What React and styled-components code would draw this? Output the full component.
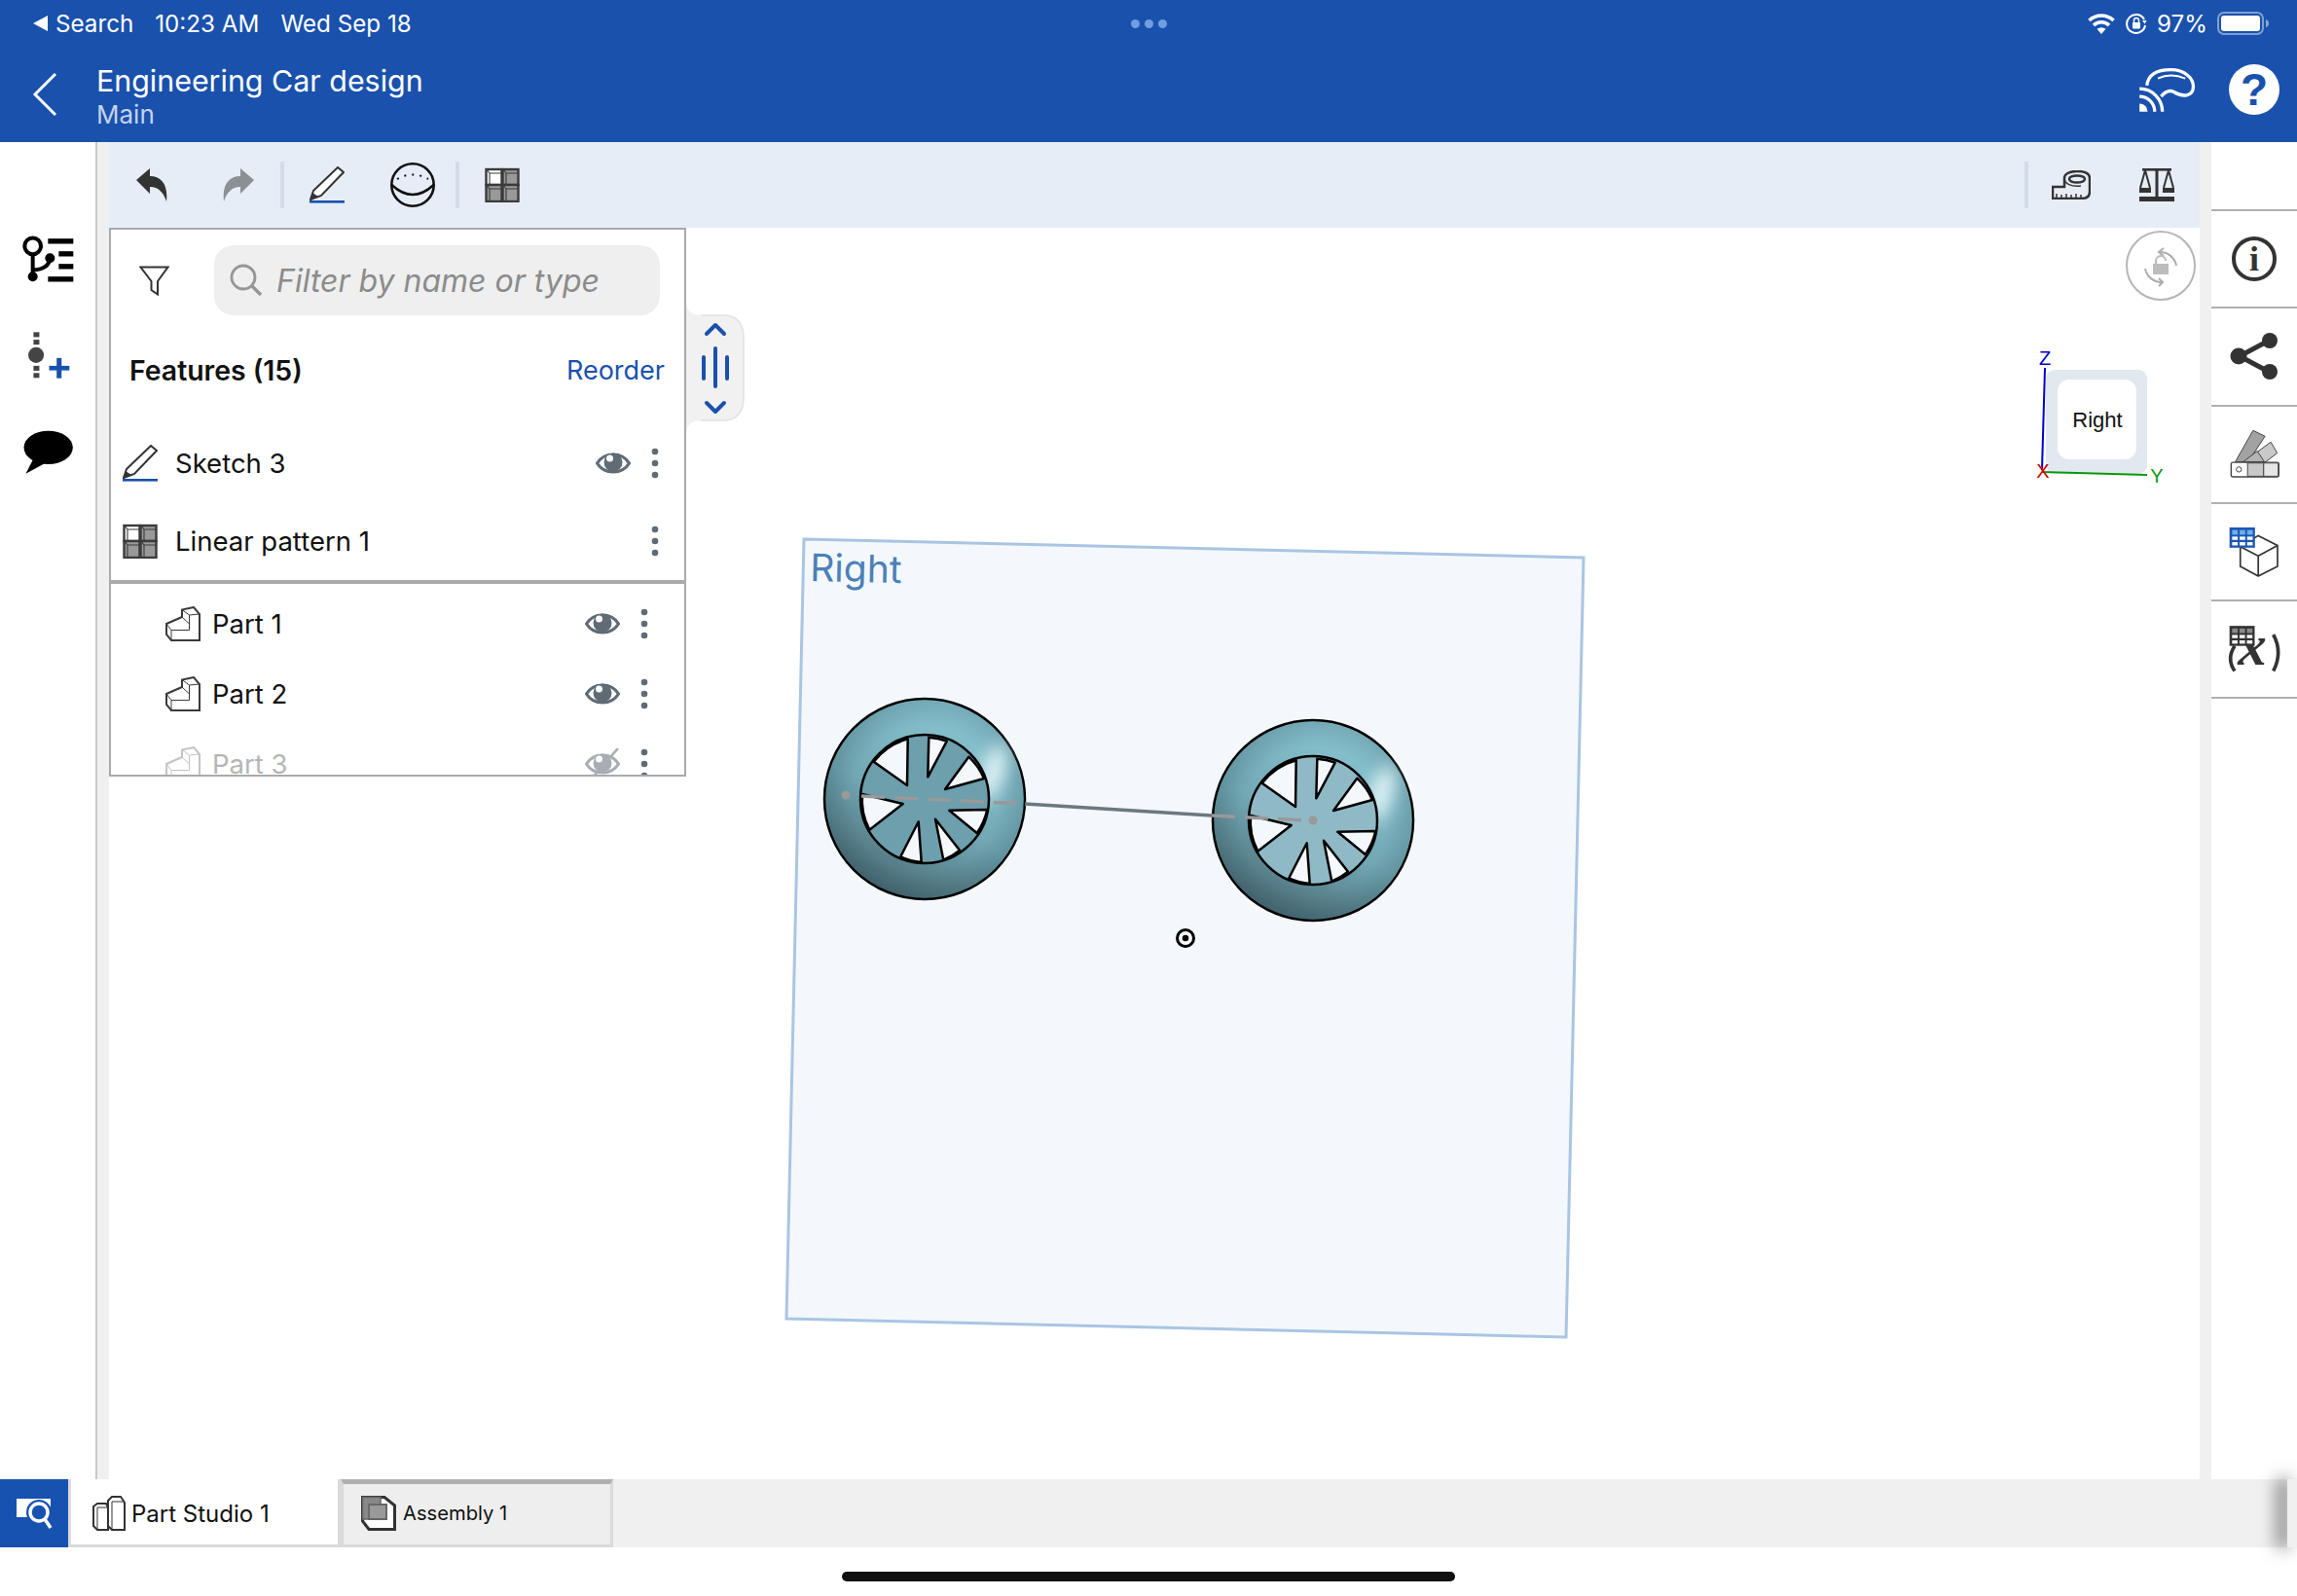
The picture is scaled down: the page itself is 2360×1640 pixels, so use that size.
import styled, { createGlobalStyle } from 'styled-components';

const BLUE = '#1951ad';
const INK = '#333';

const Global = createGlobalStyle`
    html, body { margin: 0; padding: 0; background: #fff; }
    body { font-family: Inter, "Noto Sans", sans-serif; color: #111; }
`;

const Page = styled.div`
    width: 2360px;
    height: 1640px;
    display: flex;
    flex-direction: column;
    overflow: hidden;
    background: #fff;
`;

const Header = styled.header`
    height: 146px;
    flex: none;
    background: ${BLUE};
    color: #fff;
    position: relative;
    display: flex;
    flex-direction: column;
`;

const StatusBar = styled.div`
    height: 48px;
    display: flex;
    align-items: center;
    justify-content: space-between;
    padding: 0 28px 0 33px;
    font-size: 24.2px;
`;

const StatusSide = styled.div`
    display: flex;
    align-items: center;
    gap: ${(p) => p.$gap}px;
`;

const BackSearch = styled.span`
    display: flex;
    align-items: center;
    gap: 7px;
`;

const CenterDots = styled.div`
    position: absolute;
    top: 20px;
    left: 1162px;
    display: flex;
    gap: 5px;
    i {
        width: 9px;
        height: 9px;
        border-radius: 50%;
        background: #6f9fe0;
    }
`;

const TitleBar = styled.div`
    flex: 1;
    display: flex;
    align-items: center;
    padding: 0 18px 0 33px;
`;

const TitleText = styled.div`
    margin-left: 40px;
    display: flex;
    flex-direction: column;
`;

const DocTitle = styled.div`
    font-size: 30.4px;
    line-height: 40px;
    margin-top: 2px;
`;

const DocSub = styled.div`
    font-size: 26px;
    line-height: 30px;
    color: #c4d3ec;
`;

const HeaderRight = styled.div`
    margin-left: auto;
    display: flex;
    align-items: center;
    gap: 33px;
    margin-top: -10px;
`;

const HelpBadge = styled.div`
    width: 52px;
    height: 52px;
    border-radius: 50%;
    background: #fff;
    color: ${BLUE};
    font-family: 'Liberation Sans', sans-serif;
    font-weight: 700;
    font-size: 46px;
    line-height: 52px;
    text-align: center;
`;

const Body = styled.div`
    flex: none;
    height: 1374px;
    display: flex;
`;

const LeftRail = styled.nav`
    width: 98px;
    flex: none;
    display: flex;
    flex-direction: column;
    align-items: center;
    padding-top: 94px;
    box-sizing: border-box;
    svg { display: block; }
`;

const Strip = styled.div`
    width: ${(p) => p.$w}px;
    flex: none;
    background: #f0f0f0;
    border-left: ${(p) => (p.$line ? '2px solid #c8c8c8' : 'none')};
    box-sizing: border-box;
`;

const Main = styled.main`
    width: 2148px;
    flex: none;
    display: flex;
    flex-direction: column;
`;

const Toolbar = styled.div`
    height: 88px;
    flex: none;
    background: #e7edf7;
    display: flex;
    align-items: center;
`;

const Tool = styled.div`
    display: flex;
    margin-left: ${(p) => p.$ml}px;
    svg { display: block; }
`;

const ToolSep = styled.div`
    width: 4px;
    height: 48px;
    background: #d2dde7;
    margin-left: ${(p) => p.$ml};
`;

const Canvas = styled.div`
    flex: 1;
    position: relative;
    background: #fff;
`;

const Scene = styled.svg`
    position: absolute;
    inset: 0;
`;

const Panel = styled.section`
    position: absolute;
    left: 0;
    top: 0;
    width: 593px;
    height: 564px;
    box-sizing: border-box;
    border: 2px solid #aaa;
    background: #fff;
    overflow: hidden;
    display: flex;
    flex-direction: column;
`;

const SearchRow = styled.div`
    height: 72px;
    flex: none;
    margin-top: 16px;
    display: flex;
    align-items: center;
    padding-left: 29px;
`;

const SearchBox = styled.div`
    width: 458px;
    height: 72px;
    margin-left: 46px;
    border-radius: 20px;
    background: #efefef;
    display: flex;
    align-items: center;
    padding-left: 16px;
    box-sizing: border-box;
    color: #8b8b8b;
    font-style: italic;
    font-size: 32px;
    gap: 14px;
`;

const FeatureHead = styled.div`
    height: 112px;
    flex: none;
    display: flex;
    align-items: center;
    justify-content: space-between;
    padding: 0 20px 0 19px;
    box-sizing: border-box;
`;

const HeadLabel = styled.div`
    font-size: 28.4px;
    font-weight: 600;
    color: #111;
`;

const Reorder = styled.div`
    font-size: 27px;
    color: ${BLUE};
`;

const FeatureRow = styled.div`
    height: 80px;
    flex: none;
    display: flex;
    align-items: center;
    padding-left: 12px;
    box-sizing: border-box;
    font-size: 27.5px;
    svg { display: block; flex: none; }
`;

const RowLabel = styled.span`
    margin-left: ${(p) => p.$ml}px;
    color: ${(p) => (p.$off ? '#b5b5b5' : '#111')};
`;

const RowActions = styled.div`
    margin-left: auto;
    display: flex;
    align-items: center;
    gap: 21px;
    padding-right: ${(p) => p.$pr}px;
`;

const PartDivider = styled.div`
    height: 4px;
    flex: none;
    background: #aaa;
`;

const PartRow = styled(FeatureRow)`
    height: 72px;
    padding-left: 56px;
`;

const PartList = styled.div`
    padding-top: 5px;
`;

const Handle = styled.div`
    position: absolute;
    left: 593px;
    top: 79px;
    svg { display: block; }
`;

const RightRail = styled.aside`
    width: 88px;
    flex: none;
    padding-top: 69px;
    box-sizing: border-box;
    display: flex;
    flex-direction: column;
`;

const RailItem = styled.div`
    height: 100.25px;
    box-sizing: border-box;
    border-top: 2px solid #b0b0b0;
    display: flex;
    align-items: center;
    justify-content: center;
    svg { display: block; }
`;

const RailLast = styled.div`
    border-top: 2px solid #b0b0b0;
`;

const InfoBadge = styled.div`
    width: 46px;
    height: 46px;
    box-sizing: border-box;
    border: 4px solid ${INK};
    border-radius: 50%;
    color: ${INK};
    font-family: 'Liberation Serif', serif;
    font-weight: 700;
    font-size: 36px;
    line-height: 38px;
    text-align: center;
`;

const TabBar = styled.div`
    height: 70px;
    flex: none;
    display: flex;
    background: #f0f0f0;
    position: relative;
`;

const SearchTab = styled.div`
    width: 70px;
    flex: none;
    background: #1752b0;
    display: flex;
    align-items: center;
    justify-content: center;
`;

const Tab = styled.div`
    width: ${(p) => p.$w}px;
    flex: none;
    box-sizing: border-box;
    display: flex;
    align-items: center;
    color: #111;
    padding-left: ${(p) => p.$pl}px;
    padding-top: ${(p) => (p.$active ? 3 : 0)}px;
    padding-bottom: ${(p) => (p.$active ? 0 : 3)}px;
    background: ${(p) => (p.$active ? '#fff' : '#eee')};
    border-bottom: 3px solid #dadada;
    border-right: 3px solid #dadada;
    border-left: 3px solid #dadada;
    border-top: ${(p) => (p.$active ? 'none' : '5px solid #b0b0b0')};
    font-size: ${(p) => (p.$active ? 24 : 20.2)}px;
    gap: ${(p) => p.$gap}px;
    svg { display: block; flex: none; }
`;

const TabEnd = styled.div`
    position: absolute;
    right: 0;
    top: 0;
    bottom: 0;
    width: 10px;
    background: #f0f0f0;
    box-shadow: -9px 0 17px 1px rgba(0, 0, 0, 0.5);
`;

const HomeArea = styled.div`
    flex: 1;
    display: flex;
    justify-content: center;
    padding-top: 25px;
    box-sizing: border-box;
`;

const HomeBar = styled.div`
    width: 630px;
    height: 10px;
    border-radius: 5px;
    background: #111;
`;

const Back = () => (
    <svg width="26" height="46" viewBox="0 0 26 46" fill="none">
        <path d="M24 2 L3 23 L24 44" stroke="#fff" strokeWidth="3" />
    </svg>
);

const Wifi = () => (
    <svg width="30" height="22" viewBox="0 0 30 22">
        <path d="M15 22 L10.5 16.8 A7 7 0 0 1 19.5 16.8 Z" fill="#fff" />
        <path d="M7 13 A11.5 11.5 0 0 1 23 13" fill="none" stroke="#fff" strokeWidth="3.6" />
        <path d="M2.5 8 A18 18 0 0 1 27.5 8" fill="none" stroke="#fff" strokeWidth="3.6" />
    </svg>
);

const RotationLock = () => (
    <svg width="22" height="22" viewBox="0 0 22 22" fill="none">
        <path d="M19 7 A9.5 9.5 0 1 0 20 13" stroke="#fff" strokeWidth="2" />
        <path d="M17 8 L21.5 8 L19.5 11.5 Z" fill="#fff" />
        <rect x="7" y="10" width="8" height="6.5" rx="1" fill="#fff" />
        <path d="M8.5 10 V8 A2.5 2.5 0 0 1 13.5 8 V10" stroke="#fff" strokeWidth="1.4" />
    </svg>
);

const Battery = () => (
    <svg width="54" height="24" viewBox="0 0 54 24">
        <rect x="1" y="1" width="46" height="22" rx="6" fill="none" stroke="#fff" strokeOpacity=".45" strokeWidth="2" />
        <rect x="4" y="4" width="40" height="16" rx="3" fill="#fff" />
        <path d="M50 8 Q53 9 53 12 Q53 15 50 16 Z" fill="#fff" fillOpacity=".5" />
    </svg>
);

const Headset = () => (
    <svg width="60" height="47" viewBox="715 205 180 142" fill="none" stroke="#fff">
        <path d="M741 262 C745 225 775 213 815 213 C860 213 885 240 885 265 C885 298 850 298 825 282 C810 274 795 284 785 296" strokeWidth="10" />
        <path d="M775 240 Q815 222 860 240" strokeWidth="6" />
        <path d="M718 343 V318 A25 25 0 0 1 743 343 Z" fill="#fff" stroke="none" />
        <path d="M718 296 A47 47 0 0 1 765 343" strokeWidth="10" />
        <path d="M718 272 A71 71 0 0 1 789 343" strokeWidth="10" />
    </svg>
);

const Undo = ({ fill = '#333', flip }) => (
    <svg width="32" height="34" viewBox="0 0 32 34" style={flip ? { transform: 'scaleX(-1)' } : undefined}>
        <path d="M0 12 L14 0 L14 8 C26 8 33 17 31 34 C28 25 23 19 14 19 L14 26 Z" fill={fill} />
    </svg>
);

const Pencil = () => (
    <svg width="36" height="38" viewBox="0 0 36 38" fill="none">
        <path d="M4 25 L29 1 L35 6 L12 30 L1 34 Z" stroke="#333" strokeWidth="2" fill="#fff" />
        <path d="M1 34 L3 27 L9 31 Z" fill="#333" />
        <rect x="0" y="35" width="36" height="2.6" fill={BLUE} />
    </svg>
);

const Sphere = () => (
    <svg width="46" height="46" viewBox="0 0 46 46" fill="none" stroke="#111">
        <circle cx="23" cy="23" r="21.7" strokeWidth="2.6" />
        <path d="M1.5 23 Q23 43 44.5 23" strokeWidth="2.4" />
        <path d="M7 17 Q23 8 39 17" strokeWidth="2" strokeDasharray="2 6" />
    </svg>
);

const Pattern = ({ size = 36 }) => (
    <svg width={size} height={size} viewBox="0 0 36 36" stroke="#3a3a3a" strokeWidth="2.4">
        <rect x="1.5" y="2" width="16" height="16" fill="#fff" />
        <rect x="18.5" y="2" width="16" height="16" fill="#999" />
        <rect x="1.5" y="18" width="16" height="17" fill="#999" />
        <rect x="18.5" y="18" width="16" height="17" fill="#999" />
        <path d="M2 2 L5 6 H18 M5 6 V18 M19 2 L22 6 H35 M22 6 V18 M2 18 L5 22 H18 M5 22 V35 M19 18 L22 22 H35 M22 22 V35" fill="none" strokeWidth="1.1" />
    </svg>
);

const Funnel = () => (
    <svg width="31" height="31" viewBox="0 0 31 31" fill="none">
        <path d="M1.5 1.5 H29.5 L19 16 V29.5 L12.5 25 V16 Z" stroke="#333" strokeWidth="2" />
    </svg>
);

const SearchGlyph = () => (
    <svg width="34" height="34" viewBox="0 0 34 34" fill="none" stroke="#969696" strokeWidth="2.8">
        <circle cx="14" cy="14" r="12" />
        <path d="M23 23 L32 32" strokeWidth="3.4" />
    </svg>
);

const Eye = ({ off }) => (
    <svg width="36" height="32" viewBox="0 0 36 32" fill="none" opacity={off ? 0.55 : 1}>
        <path d="M1.5 16 C9 4 27 4 34.5 16 C27 28 9 28 1.5 16 Z" stroke="#606b76" strokeWidth="3.2" fill="#fff" />
        <circle cx="18" cy="15" r="9.5" fill="#606b76" />
        <circle cx="14.5" cy="11" r="3.5" fill="#fff" />
        {off && <path d="M6 32 L34 0" stroke="#606b76" strokeWidth="2.5" />}
    </svg>
);

const Kebab = () => (
    <svg width="8" height="32" viewBox="0 0 8 32" fill="#606b76">
        <circle cx="4" cy="4" r="3.3" />
        <circle cx="4" cy="16" r="3.3" />
        <circle cx="4" cy="28" r="3.3" />
    </svg>
);

const PartGlyph = ({ off }) => (
    <svg width="36" height="36" viewBox="0 0 36 36" fill="#fff" stroke={off ? '#c4c4c4' : '#3a3a3a'}>
        <path d="M1 18 L17 11 V3.5 L29 1 L35 8 V35 H6 L1 29 Z" strokeWidth="2" />
        <path d="M17 3.5 L24.5 9 L35 8 M24.5 9 V24.5 H6 L1 18 M6 24.5 V35 M17 11 L24.5 18" fill="none" strokeWidth="1" />
    </svg>
);

const HandleArt = () => (
    <svg width="60" height="130" viewBox="0 0 60 130" fill="none">
        <path d="M0 0 C2 7 6 11 15 11 H38 Q59 11 59 35 V95 Q59 119 38 119 H15 C6 119 2 123 0 129 Z" fill="#f1f1f1" />
        <path d="M15 11 H38 Q59 11 59 35 V95 Q59 119 38 119 H15" stroke="#e2e2e2" strokeWidth="1.5" />
        <g stroke={BLUE} strokeLinecap="round" strokeLinejoin="round" strokeWidth="4">
            <path d="M21 30 L30 21 L39 30" />
            <path d="M18 54 V76 M42 54 V76 M30 45 V84" />
            <path d="M21 101 L30 110 L39 101" />
        </g>
    </svg>
);

const FeaturesRailIcon = () => (
    <svg width="55" height="52" viewBox="65 60 165 155">
        <circle cx="100" cy="98" r="25" fill="none" stroke="#000" strokeWidth="12" />
        <path d="M100 122 V192 M100 172 Q150 170 153 135" fill="none" stroke="#000" strokeWidth="12" />
        <circle cx="100" cy="192" r="15" />
        <circle cx="153" cy="135" r="15" />
        <rect x="147" y="75" width="78" height="16" />
        <rect x="180" y="114" width="45" height="16" />
        <rect x="180" y="153" width="45" height="16" />
        <rect x="147" y="192" width="78" height="16" />
    </svg>
);

const AddRailIcon = () => (
    <svg width="47" height="52" viewBox="85 360 140 155" style={{ marginTop: 47, marginLeft: 3 }}>
        <g fill="#444">
            <rect x="107" y="367" width="18" height="15" />
            <rect x="107" y="390" width="18" height="15" />
            <circle cx="115" cy="437" r="24" />
            <rect x="107" y="470" width="18" height="15" />
            <rect x="107" y="492" width="18" height="15" />
        </g>
        <rect x="155" y="470" width="62" height="14" fill={BLUE} />
        <rect x="178" y="446" width="15" height="62" fill={BLUE} />
    </svg>
);

const CommentRailIcon = () => (
    <svg width="55" height="48" viewBox="65 665 165 145" style={{ marginTop: 50 }}>
        <ellipse cx="148" cy="722" rx="76" ry="52" />
        <path d="M78 803 L100 760 L135 772 Z" />
    </svg>
);

const Share = () => (
    <svg width="50" height="48" viewBox="0 0 50 48" fill={INK}>
        <path d="M10 24 L40 8 M10 24 L40 40" stroke={INK} strokeWidth="5" />
        <circle cx="9" cy="24" r="8.5" />
        <circle cx="41" cy="8" r="8" />
        <circle cx="41" cy="40" r="8" />
    </svg>
);

const Swatches = () => (
    <svg width="53" height="51" viewBox="750 665 160 152" stroke="#444" strokeWidth="3">
        <path d="M770 765 L825 668 L862 686 L820 750 L800 765 Z" fill="#a2a2a2" />
        <path d="M815 752 L880 704 L900 738 L865 765 H800 Z" fill="#c9c9c9" />
        <path d="M795 765 L838 732 L860 765 Z" fill="#b4b4b4" />
        <rect x="757" y="767" width="148" height="45" rx="6" fill="#fff" strokeWidth="4" />
        <rect x="808" y="769" width="50" height="41" fill="#c8c8c8" />
        <rect x="858" y="769" width="45" height="41" fill="#e6e6e6" />
        <circle cx="781" cy="789" r="8" fill="#fff" />
    </svg>
);

const TableCube = () => (
    <svg width="52" height="52" viewBox="748 960 155 155">
        <path d="M838 988 L897 1018 V1082 L838 1112 L783 1082 V1022 Z M783 1022 L838 1050 L897 1018 M838 1050 V1112" fill="#fff" stroke="#333" strokeWidth="5" strokeLinejoin="round" />
        <rect x="750" y="963" width="78" height="62" fill="#1d57b5" />
        <g fill="#6ab2ea">
            <rect x="758" y="971" width="17" height="14" />
            <rect x="781" y="971" width="17" height="14" />
            <rect x="804" y="971" width="17" height="14" />
        </g>
        <g fill="#fff">
            <rect x="758" y="991" width="17" height="10" />
            <rect x="781" y="991" width="17" height="10" />
            <rect x="804" y="991" width="17" height="10" />
            <rect x="758" y="1008" width="17" height="10" />
            <rect x="781" y="1008" width="17" height="10" />
            <rect x="804" y="1008" width="17" height="10" />
        </g>
    </svg>
);

const Variables = () => (
    <svg width="53" height="50" viewBox="748 1260 160 150" style={{ overflow: 'visible' }}>
        <path d="M766 1325 Q740 1365 766 1403" fill="none" stroke="#333" strokeWidth="11" />
        <path d="M886 1290 Q916 1345 886 1403" fill="none" stroke="#333" strokeWidth="11" />
        <text x="776" y="1382" fontFamily="'Liberation Serif', serif" fontStyle="italic" fontWeight="700" fontSize="178" fill="#333">x</text>
        <rect x="750" y="1263" width="78" height="62" fill="#333" />
        <g fill="#8a8a8a">
            <rect x="758" y="1271" width="17" height="14" />
            <rect x="781" y="1271" width="17" height="14" />
            <rect x="804" y="1271" width="17" height="14" />
        </g>
        <g fill="#fff">
            <rect x="758" y="1291" width="17" height="10" />
            <rect x="781" y="1291" width="17" height="10" />
            <rect x="804" y="1291" width="17" height="10" />
            <rect x="758" y="1308" width="17" height="10" />
            <rect x="781" y="1308" width="17" height="10" />
            <rect x="804" y="1308" width="17" height="10" />
        </g>
    </svg>
);

const SearchTabIcon = () => (
    <svg width="38" height="32" viewBox="0 0 38 32">
        <path d="M1 1 H36 V20 H1 Z" fill="#fff" />
        <circle cx="24" cy="15" r="13" fill="#1752b0" />
        <circle cx="24" cy="15" r="9" fill="none" stroke="#fff" strokeWidth="3.5" />
        <path d="M30 22 L36 31" stroke="#fff" strokeWidth="3.5" />
    </svg>
);

const StudioIcon = () => (
    <svg width="34" height="36" viewBox="0 0 34 36" fill="#fff" stroke="#333" strokeWidth="2">
        <path d="M1 11 L5 8 H14 L16 12 V35 H5 L1 31 Z" />
        <path d="M16 5 L20 1 H29 L33 7 V35 H20 L16 31 Z" />
        <path d="M5 12 V35 M5 12 H16 M20 6 V35 M20 6 H33" fill="none" strokeWidth="1" />
    </svg>
);

const AssemblyIcon = () => (
    <svg width="36" height="36" viewBox="0 0 36 36">
        <path d="M1.5 1.5 H24 L34.5 10 V34.5 H8 L1.5 26 Z" fill="#fff" stroke="#333" strokeWidth="3" />
        <rect x="8" y="9" width="18" height="15" fill="#999" stroke="#666" strokeWidth="2" />
        <path d="M1.5 1.5 H20 V9 H8 V24 H1.5 Z" fill="#888" stroke="#666" strokeWidth="1.5" />
    </svg>
);

const Tape = () => (
    <svg width="40" height="30" viewBox="0 0 40 30" fill="none" stroke="#333">
        <path d="M1 17 H13 V8 C13 3 20 1 26 1 C33 1 39 3 39 8 V22 C39 27 35 29 30 29 H1 Z" fill="#e7edf7" strokeWidth="2.5" />
        <ellipse cx="26" cy="9" rx="8" ry="3.6" strokeWidth="2.5" />
        <path d="M13 8 C13 14 20 17 30 16 M5 29 V24 M10 29 V25 M15 29 V24 M20 29 V25 M25 29 V24 M30 29 V25" strokeWidth="1.5" />
    </svg>
);

const Scale = () => (
    <svg width="36" height="36" viewBox="0 0 36 36" fill="#333">
        <rect x="0" y="30" width="36" height="5" />
        <rect x="0" y="21" width="12" height="5" />
        <rect x="24" y="21" width="12" height="5" />
        <rect x="3" y="1" width="30" height="2.6" />
        <rect x="16.5" y="1" width="3" height="30" />
        <path d="M6 3 L1 21 M6 3 L11 21 M30 3 L25 21 M30 3 L35 21" stroke="#333" strokeWidth="2" fill="none" />
    </svg>
);

const HOLES = [
    [[-52.3, -38.3], [-17.3, -61.7], [-18, -14]],
    [[4.3, -63.3], [22.7, -59.3], [3.3, -22.7]],
    [[45.3, -43.3], [61, -21], [21, -10]],
    [[64.3, 11], [53.7, 35], [25.3, 11.7]],
    [[36, 52.7], [19.3, 62.7], [11, 20.7]],
    [[-3.3, 65], [-24.7, 59.3], [-6.3, 23.3]],
    [[-56.7, 31.7], [-64, -5], [-22.3, 5]],
];

const Wheel = ({ x, y, hub }) => (
    <g transform={`translate(${x} ${y})`}>
        <circle r="103" fill="url(#tireBase)" stroke="#000" strokeWidth="2.5" />
        <circle r="101.5" fill="url(#tireEdge)" />
        <ellipse cx="70" cy="-27" rx="11" ry="30" fill="#effdff" opacity=".9" filter="url(#soft)" transform="rotate(18 70 -27)" />
        <circle r="66" fill={hub} stroke="#000" strokeWidth="2.5" />
        {HOLES.map(([a, b, c], i) => (
            <path
                key={i}
                d={`M${a[0]} ${a[1]} A66 66 0 0 1 ${b[0]} ${b[1]} L${c[0]} ${c[1]} Z`}
                fill="#f4f8fc"
                stroke="#000"
                strokeWidth="2.5"
                strokeLinejoin="round"
            />
        ))}
    </g>
);

const SceneArt = () => (
    <Scene width="2148" height="1286" viewBox="112 234 2148 1286">
        <defs>
            <linearGradient id="tireBase" x1=".75" y1=".08" x2=".3" y2=".95">
                <stop offset="0" stopColor="#8ac5d2" />
                <stop offset=".55" stopColor="#72a8b4" />
                <stop offset="1" stopColor="#4b6d77" />
            </linearGradient>
            <radialGradient id="tireEdge" cx=".5" cy=".5" r=".5">
                <stop offset=".74" stopColor="#16303a" stopOpacity="0" />
                <stop offset="1" stopColor="#16303a" stopOpacity=".18" />
            </radialGradient>
            <filter id="soft" x="-150%" y="-100%" width="400%" height="300%">
                <feGaussianBlur stdDeviation="9" />
            </filter>
        </defs>
        <polygon points="826,554 1627,573 1609,1374 808,1355" fill="#f4f8fc" stroke="#a9c5e3" strokeWidth="3" />
        <text x="832" y="597" fontSize="39" fill="#4b80b8" fontFamily="Inter, sans-serif" transform="rotate(1.3 832 597)">Right</text>
        <Wheel x={950} y={821} hub="#6d9fad" />
        <Wheel x={1349} y={843} hub="#90b9c6" />
        <path d="M1053 826 L1245 838" stroke="#6b7880" strokeWidth="3.5" />
        <path d="M885 818 L1053 826 M1245 838 L1340 843" stroke="#999" strokeWidth="3.5" strokeDasharray="24 10" />
        <circle cx="869" cy="817" r="4.5" fill="#999" />
        <circle cx="1349" cy="843" r="4.5" fill="#999" />
        <circle cx="1218" cy="964" r="8.5" fill="#fff" stroke="#000" strokeWidth="3" />
        <circle cx="1218" cy="964" r="3.3" fill="#000" />

        <circle cx="2220" cy="273" r="35" fill="#fff" stroke="#b6b6b6" strokeWidth="2" />
        <path d="M2219 259 A17 17 0 0 1 2236 273 M2204 276 A17 17 0 0 0 2221 290" fill="none" stroke="#adadad" strokeWidth="2" />
        <path d="M2223 255 L2218 259 L2223 263 M2218 286 L2222 290 L2218 294" fill="none" stroke="#adadad" strokeWidth="2" />
        <rect x="2212" y="271" width="16" height="11" fill="#bcbcbc" />
        <path d="M2215 271 V268 A5 5 0 0 1 2225 268" fill="none" stroke="#bcbcbc" strokeWidth="2" />

        <rect x="2102" y="380" width="104" height="107" rx="9" fill="#e2e8ef" />
        <rect x="2114" y="390" width="81" height="82" rx="12" fill="#fff" />
        <text x="2155" y="439" textAnchor="middle" fontSize="22" fontFamily="'Liberation Sans', sans-serif" fill="#111">Right</text>
        <path d="M2101 378 L2098 483" stroke="#0000cc" strokeWidth="2" />
        <path d="M2098 485 L2206 488" stroke="#0a990a" strokeWidth="2" />
        <text x="2101" y="375" textAnchor="middle" fontSize="20" fontFamily="'Liberation Sans', sans-serif" fill="#0000cc">Z</text>
        <text x="2099" y="491" textAnchor="middle" fontSize="20" fontFamily="'Liberation Sans', sans-serif" fill="#cc0000">X</text>
        <text x="2216" y="496" textAnchor="middle" fontSize="20" fontFamily="'Liberation Sans', sans-serif" fill="#0a990a">Y</text>
    </Scene>
);

const App = () => (
    <Page>
        <Global />
        <Header>
            <StatusBar>
                <StatusSide $gap={22}>
                    <BackSearch>
                        <svg width="17" height="16" viewBox="0 0 17 16"><path d="M16 0 V16 L1 8 Z" fill="#fff" /></svg>
                        Search
                    </BackSearch>
                    <span>10:23 AM</span>
                    <span>Wed Sep 18</span>
                </StatusSide>
                <StatusSide $gap={10}>
                    <Wifi />
                    <RotationLock />
                    <span>97%</span>
                    <Battery />
                </StatusSide>
            </StatusBar>
            <CenterDots><i /><i /><i /></CenterDots>
            <TitleBar>
                <Back />
                <TitleText>
                    <DocTitle>Engineering Car design</DocTitle>
                    <DocSub>Main</DocSub>
                </TitleText>
                <HeaderRight>
                    <Headset />
                    <HelpBadge>?</HelpBadge>
                </HeaderRight>
            </TitleBar>
        </Header>
        <Body>
            <LeftRail>
                <FeaturesRailIcon />
                <AddRailIcon />
                <CommentRailIcon />
            </LeftRail>
            <Strip $w={14} $line />
            <Main>
                <Toolbar>
                    <Tool $ml={28}><Undo /></Tool>
                    <Tool $ml={57}><Undo fill="#8b9095" flip /></Tool>
                    <ToolSep $ml="27px" />
                    <Tool $ml={26}><Pencil /></Tool>
                    <Tool $ml={47}><Sphere /></Tool>
                    <ToolSep $ml="21px" />
                    <Tool $ml={26}><Pattern /></Tool>
                    <ToolSep $ml="auto" />
                    <Tool $ml={24}><Tape /></Tool>
                    <Tool $ml={50}><Scale /></Tool>
                    <Tool $ml={26} />
                </Toolbar>
                <Canvas>
                    <SceneArt />
                    <Panel>
                        <SearchRow>
                            <Funnel />
                            <SearchBox>
                                <SearchGlyph />
                                Filter by name or type
                            </SearchBox>
                        </SearchRow>
                        <FeatureHead>
                            <HeadLabel>Features (15)</HeadLabel>
                            <Reorder>Reorder</Reorder>
                        </FeatureHead>
                        <FeatureRow>
                            <Pencil />
                            <RowLabel $ml={18}>Sketch 3</RowLabel>
                            <RowActions $pr={26}><Eye /><Kebab /></RowActions>
                        </FeatureRow>
                        <FeatureRow>
                            <Pattern />
                            <RowLabel $ml={18}>Linear pattern 1</RowLabel>
                            <RowActions $pr={26}><Kebab /></RowActions>
                        </FeatureRow>
                        <PartDivider />
                        <PartList>
                            <PartRow>
                                <PartGlyph />
                                <RowLabel $ml={12}>Part 1</RowLabel>
                                <RowActions $pr={37}><Eye /><Kebab /></RowActions>
                            </PartRow>
                            <PartRow>
                                <PartGlyph />
                                <RowLabel $ml={12}>Part 2</RowLabel>
                                <RowActions $pr={37}><Eye /><Kebab /></RowActions>
                            </PartRow>
                            <PartRow>
                                <PartGlyph off />
                                <RowLabel $ml={12} $off>Part 3</RowLabel>
                                <RowActions $pr={37}><Eye off /><Kebab /></RowActions>
                            </PartRow>
                        </PartList>
                    </Panel>
                    <Handle><HandleArt /></Handle>
                </Canvas>
            </Main>
            <Strip $w={12} />
            <RightRail>
                <RailItem><InfoBadge>i</InfoBadge></RailItem>
                <RailItem><Share /></RailItem>
                <RailItem><Swatches /></RailItem>
                <RailItem><TableCube /></RailItem>
                <RailItem><Variables /></RailItem>
                <RailLast />
            </RightRail>
        </Body>
        <TabBar>
            <SearchTab><SearchTabIcon /></SearchTab>
            <Tab $active $w={280} $pl={22} $gap={6}><StudioIcon />Part Studio 1</Tab>
            <Tab $w={280} $pl={18} $gap={7}><AssemblyIcon />Assembly 1</Tab>
            <TabEnd />
        </TabBar>
        <HomeArea><HomeBar /></HomeArea>
    </Page>
);

export default App;
